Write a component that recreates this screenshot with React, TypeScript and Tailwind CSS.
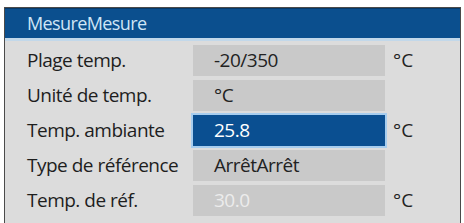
const rows = [
  { label: "Plage temp.", value: "-20/350", unit: "°C", kind: "normal" },
  { label: "Unité de temp.", value: "°C", unit: "", kind: "normal" },
  { label: "Temp. ambiante", value: "25.8", unit: "°C", kind: "active" },
  { label: "Type de référence", value: "ArrêtArrêt", unit: "", kind: "normal" },
  { label: "Temp. de réf.", value: "30.0", unit: "°C", kind: "disabled" },
];

export default function App() {
  return (
    <div className="w-[464px] h-[223px] bg-white pt-[7px] pl-[4px] overflow-hidden" style={{ fontFamily: '"Open Sans", "Noto Sans", sans-serif' }}>
      <div className="w-[457px] h-[220px] border border-[#4a4a4a] bg-[#dcdcdc]">
        <div className="h-[30px] bg-[#0b4f8e] flex items-center pl-[22px] text-[#cfe5f6] text-[18px] tracking-[-0.6px] border-t border-[#073a6a]">
          MesureMesure
        </div>
        <div className="h-[3px] bg-[#c2d8ea]" />
        <div className="flex flex-col gap-[4px] pt-[4px]">
          {rows.map((r) => (
            <div key={r.label} className="flex items-center h-[31px]">
              <div className="w-[188px] pl-[22px] text-[19px] text-[#1e1e1e] tracking-[-0.5px] whitespace-nowrap">{r.label}</div>
              {r.kind === "active" ? (
                <div className="w-[192px] h-full flex items-center pl-[21px] bg-[#0a4f91] ring-2 ring-[#a6cdef] text-white text-[19px] tracking-[-0.5px]">
                  {r.value}
                </div>
              ) : r.kind === "disabled" ? (
                <div className="w-[192px] h-full flex items-center pl-[21px] bg-[#c9c9c9] text-[#ececec] text-[19px] tracking-[-0.5px]">
                  {r.value}
                </div>
              ) : (
                <div className="w-[192px] h-full flex items-center pl-[21px] bg-[#c9c9c9] text-[#222] text-[19px] tracking-[-0.5px]">
                  {r.value}
                </div>
              )}
              <div className="ml-[8px] text-[19px] text-[#222]">{r.unit}</div>
            </div>
          ))}
        </div>
      </div>
    </div>
  );
}
